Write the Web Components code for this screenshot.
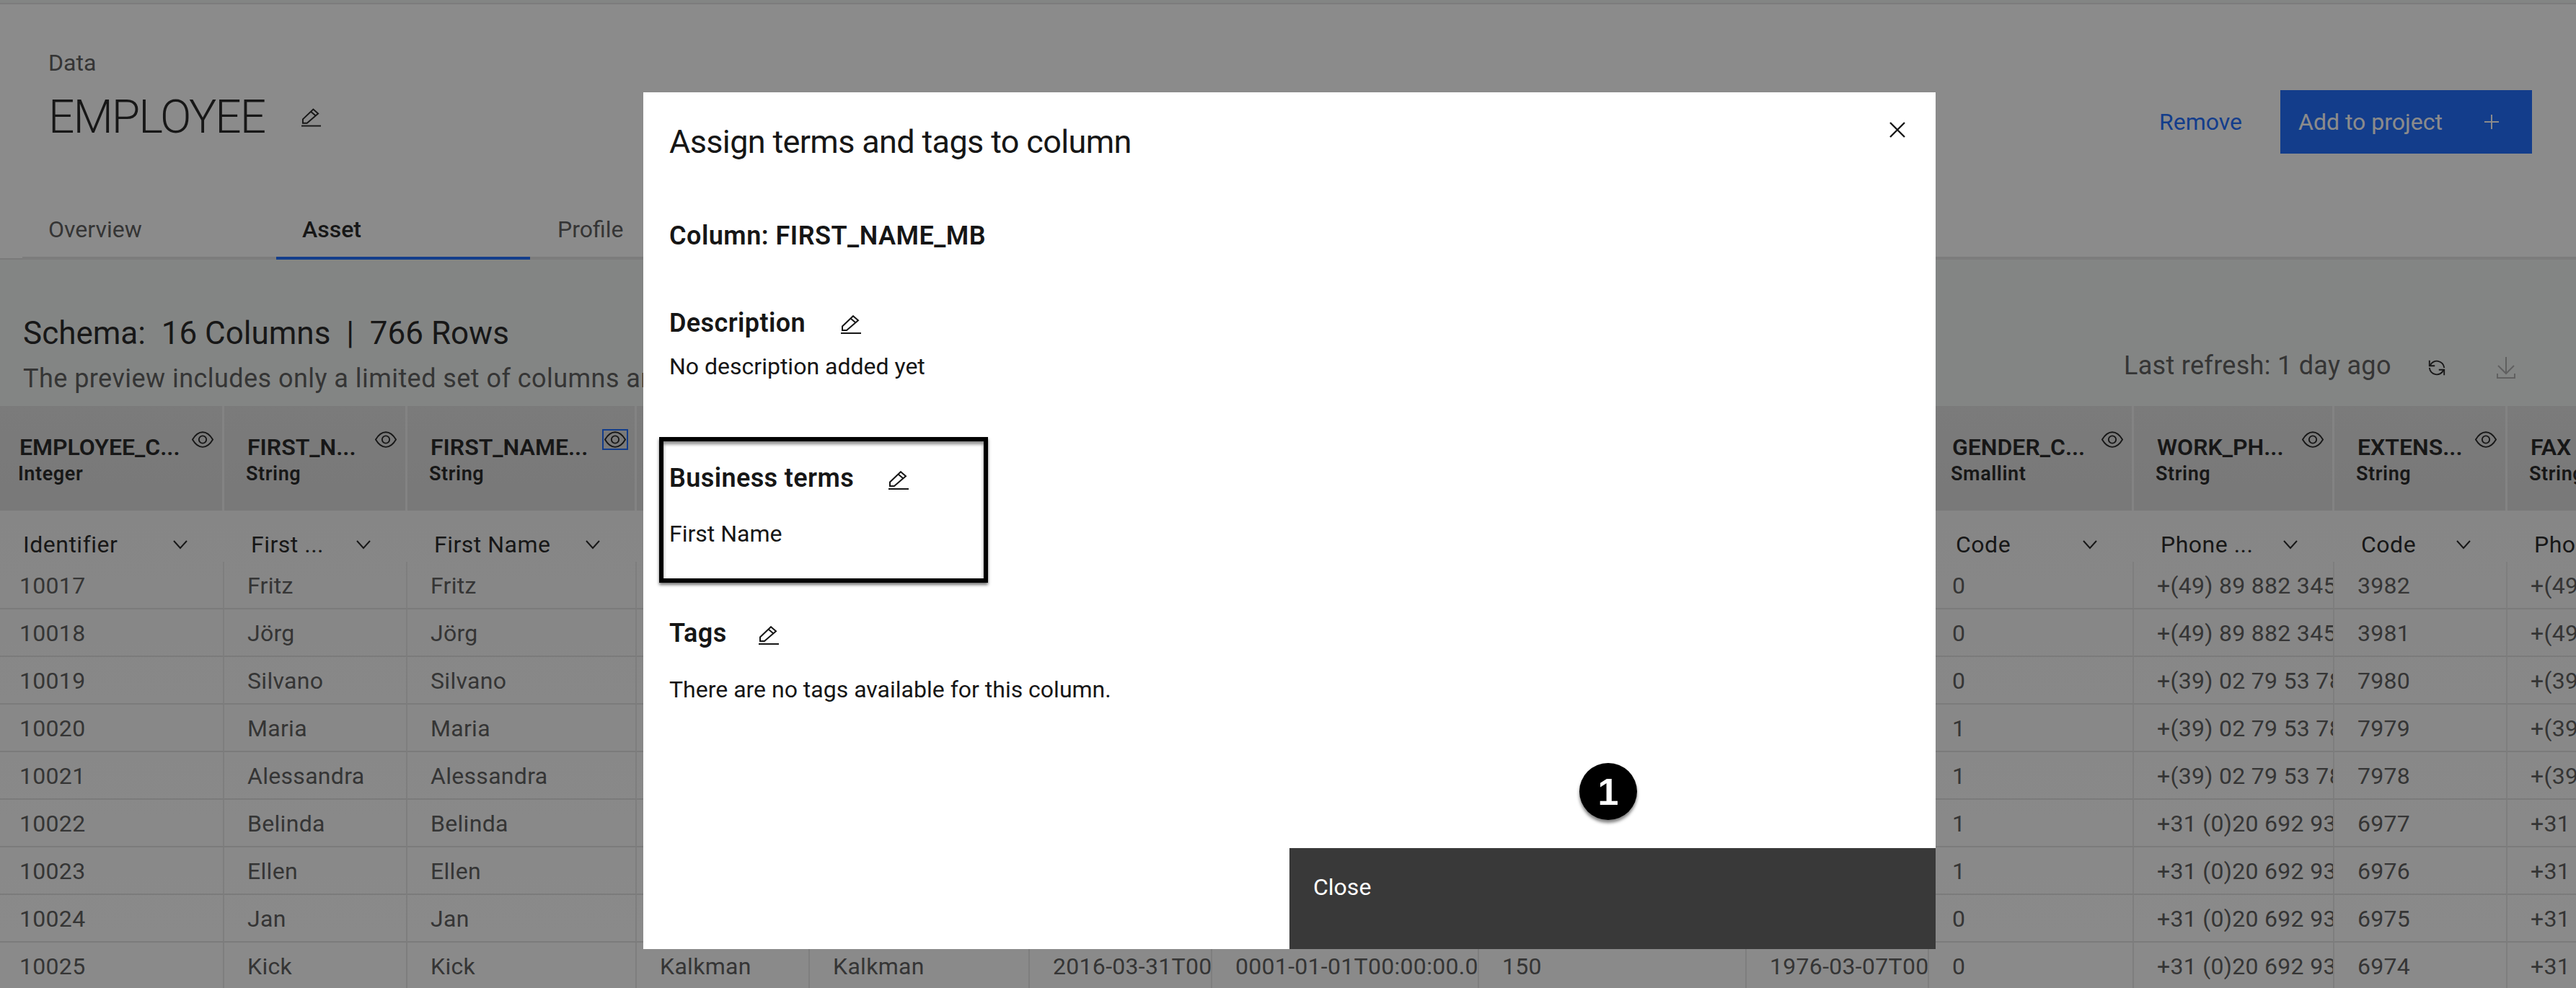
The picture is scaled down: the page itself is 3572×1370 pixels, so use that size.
<!DOCTYPE html>
<html lang="en">
<head>
<meta charset="utf-8">
<title>EMPLOYEE</title>
<style>
    html, body { margin: 0; height: 1370px; overflow: hidden; }
    body { font-family: Roboto, "Liberation Sans", sans-serif; color: #161616; background: #fff; }
</style>
</head>
<body>
<asset-page>
    <page-header></page-header>
    <schema-bar></schema-bar>
    <data-table></data-table>
</asset-page>
<term-dialog>
    <dialog-section slot="sections" label="Description" style="--gap-top: 77px; --gap-label: 16px; --icon-gap: 49px; --icon-drop: 4px">No description added yet</dialog-section>
    <dialog-section slot="sections" label="Business terms" marked style="--gap-top: 76px; --gap-label: 33px; --icon-gap: 48px">First Name</dialog-section>
    <dialog-section slot="sections" label="Tags" style="--gap-top: 48px; --gap-label: 34px; --icon-gap: 44px">There are no tags available for this column.</dialog-section>
</term-dialog>

<script>
// Icons are all drawn on their own box, size comes from the width/height attributes
const ICONS = {
    pencil: ['0 0 28 26', '<path d="M2 21 V15.5 L17 1.2 L24 7.2 L8 21 Z M13.5 4.5 L20.5 10.5"/><path d="M0 25 H28"/>'],
    eye: ['0 0 32 24', '<path d="M1 12 C6 3.5 11.5 1 16 1 S26 3.5 31 12 C26 20.5 20.5 23 16 23 S6 20.5 1 12 Z"/><circle cx="16" cy="12" r="5.5"/>'],
    chevron: ['0 0 20 13', '<path d="M1 1 L10 11 L19 1"/>'],
    close: ['0 0 22 22', '<path d="M1 1 L21 21 M21 1 L1 21"/>'],
    plus: ['0 0 20 20', '<path d="M10 0 V20 M0 10 H20"/>'],
    renew: ['0 0 28 28', '<path d="M3 3 V11 H11"/><path d="M4 10.5 A11 11 0 0 1 25 14"/><path d="M25 25 V17 H17"/><path d="M24 17.5 A11 11 0 0 1 3 14"/>'],
    download: ['0 0 26 30', '<path d="M13 0 V23 M2 12 L13 23 L24 12"/><path d="M1 23 V29 H25 V23"/>']
};

class UiIcon extends HTMLElement {
    connectedCallback() {
        const [box, body] = ICONS[this.getAttribute('name')];
        const w = this.getAttribute('width');
        const h = this.getAttribute('height');
        const sw = this.getAttribute('stroke') || 2;
        this.attachShadow({ mode: 'open' }).innerHTML = `
            <style>
                :host { display: inline-flex; flex: none; color: inherit; }
                svg { display: block; fill: none; stroke: currentColor; }
            </style>
            <svg viewBox="${box}" width="${w}" height="${h}" stroke-width="${sw}">${body}</svg>`;
    }
}
customElements.define('ui-icon', UiIcon);

const pageTemplate = document.createElement('template');
pageTemplate.innerHTML = `
    <style>
        :host { display: block; width: 3572px; height: 1370px; overflow: hidden; background: #eff2f1; }
    </style>
    <slot></slot>`;

class AssetPage extends HTMLElement {
    constructor() {
        super();
        this.attachShadow({ mode: 'open' }).appendChild(pageTemplate.content.cloneNode(true));
    }
}
customElements.define('asset-page', AssetPage);

const headerTemplate = document.createElement('template');
headerTemplate.innerHTML = `
    <style>
        :host { display: block; height: 352px; background: #fff; border-top: 2px solid #e0e0e0; margin-top: 4px; border-bottom: 2px solid #dcdcdc; box-sizing: content-box; position: relative; }
        .top { display: flex; justify-content: space-between; padding: 60px 61px 0 67px; height: 212px; box-sizing: border-box; }
        .crumb { font-size: 32px; line-height: 42px; color: #525252; }
        .title { display: flex; align-items: center; margin-top: 15px; font-size: 64px; line-height: 80px; font-weight: 300; letter-spacing: -2px; }
        .title ui-icon { margin-left: 51px; }
        .actions { display: flex; align-items: flex-start; margin-top: 59px; }
        .remove { font-size: 32px; line-height: 88px; color: #0f62fe; margin-right: 53px; }
        .add { display: flex; align-items: center; width: 349px; height: 88px; padding: 0 46px 0 25px; box-sizing: border-box; justify-content: space-between; background: #0f62fe; color: #fff; font-size: 32px; }
        .tabs { display: flex; margin-left: 31px; border-bottom: 4px solid #e0e0e0; height: 140px; box-sizing: border-box; position: absolute; left: 0; right: 0; bottom: -2px; }
        .tab { width: 352px; padding: 76px 0 0 36px; box-sizing: border-box; margin-bottom: -4px; font-size: 32px; line-height: 44px; color: #525252; border-bottom: 4px solid transparent; }
        .tab.on { color: #161616; font-weight: 500; border-bottom-color: #0f62fe; }
        .tab + .tab + .tab { padding-left: 38px; }
    </style>
    <div class="top">
        <div>
            <div class="crumb">Data</div>
            <div class="title">EMPLOYEE<ui-icon name="pencil" width="27" height="26"></ui-icon></div>
        </div>
        <div class="actions">
            <span class="remove">Remove</span>
            <span class="add">Add to project<ui-icon name="plus" width="20" height="20"></ui-icon></span>
        </div>
    </div>
    <div class="tabs">
        <div class="tab">Overview</div>
        <div class="tab on">Asset</div>
        <div class="tab">Profile</div>
    </div>`;

class PageHeader extends HTMLElement {
    constructor() {
        super();
        this.attachShadow({ mode: 'open' }).appendChild(headerTemplate.content.cloneNode(true));
    }
}
customElements.define('page-header', PageHeader);

const schemaTemplate = document.createElement('template');
schemaTemplate.innerHTML = `
    <style>
        :host { display: flex; height: 203px; box-sizing: border-box; padding: 72px 0 0 32px; position: relative; }
        .count { font-size: 44px; line-height: 60px; }
        .note { font-size: 36px; line-height: 50px; margin-top: 8px; color: #525252; white-space: nowrap; letter-spacing: .45px; }
        .refresh { position: absolute; top: 122px; left: 2945px; display: flex; align-items: center; font-size: 36px; line-height: 50px; color: #525252; letter-spacing: .3px; }
        .refresh .renew { color: #161616; margin: 6px 0 0 50px; }
        .refresh .save { color: #a8a8a8; margin: 6px 0 0 70px; }
    </style>
    <div>
        <div class="count">Schema:&nbsp; 16 Columns &nbsp;|&nbsp; 766 Rows</div>
        <div class="note">The preview includes only a limited set of columns and rows</div>
    </div>
    <div class="refresh">
        Last refresh: 1 day ago
        <ui-icon class="renew" name="renew" width="26" height="26"></ui-icon>
        <ui-icon class="save" name="download" width="26" height="30"></ui-icon>
    </div>`;

class SchemaBar extends HTMLElement {
    constructor() {
        super();
        this.attachShadow({ mode: 'open' }).appendChild(schemaTemplate.content.cloneNode(true));
    }
}
customElements.define('schema-bar', SchemaBar);

class ColHead extends HTMLElement {
    connectedCallback() {
        const name = this.getAttribute('name') || '';
        const type = this.getAttribute('type') || '';
        const focus = this.hasAttribute('focused');
        const eye = this.hasAttribute('no-eye') || !name ? '' :
            `<span class="eye ${focus ? 'focus' : ''}"><ui-icon name="eye" width="30" height="23"></ui-icon></span>`;
        this.attachShadow({ mode: 'open' }).innerHTML = `
            <style>
                :host { display: block; height: 145px; box-sizing: border-box; padding: 37px 15px 0 32px; position: relative; background: linear-gradient(#dedede, #dadada); border-right: 3px solid #eeeeee; white-space: nowrap; overflow: hidden; }
                .name { font-size: 32px; line-height: 40px; font-weight: 600; }
                .type { font-size: 27px; line-height: 34px; font-weight: 600; letter-spacing: .6px; margin-left: -2px; }
                .eye { position: absolute; top: 35px; right: 12px; display: flex; }
                .eye.focus { outline: 2px solid #0f62fe; outline-offset: 1px; }
            </style>
            <div class="name">${name}</div>
            <div class="type">${type}</div>
            ${eye}`;
    }
}
customElements.define('col-head', ColHead);

class RoleCell extends HTMLElement {
    connectedCallback() {
        const label = this.getAttribute('label') || '';
        this.attachShadow({ mode: 'open' }).innerHTML = `
            <style>
                :host { display: flex; justify-content: space-between; align-items: center; height: 71px; box-sizing: border-box; padding: 27px 51px 4px 37px; overflow: hidden; white-space: nowrap; font-size: 32px; letter-spacing: .5px; }
            </style>
            <span>${label}</span>
            ${label ? '<ui-icon name="chevron" width="20" height="13"></ui-icon>' : ''}`;
    }
}
customElements.define('role-cell', RoleCell);

// Columns under the dialog only show in the last row, the rest stay empty
const COLUMNS = [
    { width: 316, name: 'EMPLOYEE_C...', type: 'Integer', role: 'Identifier' },
    { width: 254, name: 'FIRST_N...', type: 'String', role: 'First ...' },
    { width: 318, name: 'FIRST_NAME...', type: 'String', role: 'First Name', focused: true },
    { width: 240 }, { width: 305 }, { width: 253 }, { width: 370 }, { width: 371 }, { width: 253 },
    { width: 284, name: 'GENDER_C...', type: 'Smallint', role: 'Code' },
    { width: 278, name: 'WORK_PH...', type: 'String', role: 'Phone ...' },
    { width: 240, name: 'EXTENS...', type: 'String', role: 'Code' },
    { width: 200, name: 'FAX', type: 'String', role: 'Phone ...', noEye: true }
];

const PHONE_DE = '+(49) 89 882 345';
const PHONE_IT = '+(39) 02 79 53 78';
const PHONE_NL = '+31 (0)20 692 93';

const ROWS = [
    ['10017', 'Fritz', '0', PHONE_DE, '3982'],
    ['10018', 'Jörg', '0', PHONE_DE, '3981'],
    ['10019', 'Silvano', '0', PHONE_IT, '7980'],
    ['10020', 'Maria', '1', PHONE_IT, '7979'],
    ['10021', 'Alessandra', '1', PHONE_IT, '7978'],
    ['10022', 'Belinda', '1', PHONE_NL, '6977'],
    ['10023', 'Ellen', '1', PHONE_NL, '6976'],
    ['10024', 'Jan', '0', PHONE_NL, '6975'],
    ['10025', 'Kick', '0', PHONE_NL, '6974']
];
const LAST_ROW_MIDDLE = ['Kalkman', 'Kalkman', '2016-03-31T00', '0001-01-01T00:00:00.0', '150', '1976-03-07T00'];

class DataTable extends HTMLElement {
    connectedCallback() {
        const heads = COLUMNS.map(c => `<col-head ${c.name ? `name="${c.name}" type="${c.type}"` : ''} ${c.focused ? 'focused' : ''} ${c.noEye ? 'no-eye' : ''}></col-head>`).join('');
        const roles = COLUMNS.map(c => `<role-cell label="${c.role || ''}"></role-cell>`).join('');
        const rows = ROWS.map((r, i) => {
            const middle = i === ROWS.length - 1 ? LAST_ROW_MIDDLE : ['', '', '', '', '', ''];
            const values = [r[0], r[1], r[1], ...middle, r[2], r[3], r[4], r[3]];
            return values.map(v => `<div class="cell">${v}</div>`).join('');
        }).join('');
        this.attachShadow({ mode: 'open' }).innerHTML = `
            <style>
                :host { display: block; margin-left: -5px; width: 3577px; overflow: hidden; }
                .grid { display: grid; grid-template-columns: ${COLUMNS.map(c => c.width + 'px').join(' ')}; background: linear-gradient(#f3f3f3, #fdfdfd); }
                .cell { height: 66px; box-sizing: border-box; padding-left: 32px; border-bottom: 2px solid #dfdfdf; border-right: 2px solid #e4e4e4; font-size: 32px; line-height: 66px; letter-spacing: .3px; color: #525252; white-space: nowrap; overflow: hidden; }
            </style>
            <div class="grid">${heads}${roles}${rows}</div>`;
    }
}
customElements.define('data-table', DataTable);

class DialogSection extends HTMLElement {
    connectedCallback() {
        const marked = this.hasAttribute('marked');
        this.attachShadow({ mode: 'open' }).innerHTML = `
            <style>
                :host { display: block; margin-top: var(--gap-top, 0); }
                .label { display: flex; align-items: center; font-size: 36px; line-height: 44px; font-weight: 600; letter-spacing: .4px; }
                .label ui-icon { margin: var(--icon-drop, 6px) 0 0 var(--icon-gap, 50px); }
                .text { font-size: 32px; line-height: 44px; margin-top: var(--gap-label, 20px); white-space: nowrap; }
                .mark { margin-left: -14px; width: 456px; height: 202px; box-sizing: border-box; padding: 29px 0 0 8px; border: 6px solid #000; box-shadow: 0 3px 4px rgba(0,0,0,.55), inset 0 4px 4px rgba(0,0,0,.45); }
            </style>
            <div class="${marked ? 'mark' : ''}">
                <div class="label">${this.getAttribute('label')}<ui-icon name="pencil" width="28" height="26"></ui-icon></div>
                <div class="text"><slot></slot></div>
            </div>`;
    }
}
customElements.define('dialog-section', DialogSection);

const dialogTemplate = document.createElement('template');
dialogTemplate.innerHTML = `
    <style>
        :host { display: block; position: fixed; inset: 0; background: rgba(23, 23, 23, .5); }
        .dialog { position: absolute; left: 892px; top: 128px; width: 1792px; height: 1188px; display: flex; flex-direction: column; background: #fff; color: #161616; }
        .body { flex: 1; padding: 39px 36px 0; }
        h2 { margin: 0; font-size: 45px; line-height: 60px; font-weight: 400; letter-spacing: -.65px; }
        .column { margin-top: 78px; font-size: 36px; line-height: 44px; font-weight: 600; letter-spacing: .5px; }
        .close { position: absolute; left: 1728px; top: 41px; }
        .footer { display: flex; align-self: flex-end; width: 896px; height: 140px; box-sizing: border-box; padding: 33px 0 0 33px; background: #393939; color: #fff; font-size: 32px; line-height: 42px; }
        .badge { position: absolute; left: 1298px; top: 930px; width: 80px; height: 79px; border-radius: 50%; background: #000; color: #fff; box-shadow: 0 4px 4px rgba(0,0,0,.5); display: flex; align-items: center; justify-content: center; font-family: "Liberation Sans", sans-serif; font-size: 52px; font-weight: 700; }
    </style>
    <div class="dialog">
        <div class="body">
            <h2>Assign terms and tags to column</h2>
            <div class="column">Column: FIRST_NAME_MB</div>
            <slot name="sections"></slot>
        </div>
        <div class="footer">Close</div>
        <ui-icon class="close" name="close" width="22" height="22" stroke="2.4"></ui-icon>
        <div class="badge">1</div>
    </div>`;

class TermDialog extends HTMLElement {
    constructor() {
        super();
        this.attachShadow({ mode: 'open' }).appendChild(dialogTemplate.content.cloneNode(true));
    }
}
customElements.define('term-dialog', TermDialog);
</script>
</body>
</html>
